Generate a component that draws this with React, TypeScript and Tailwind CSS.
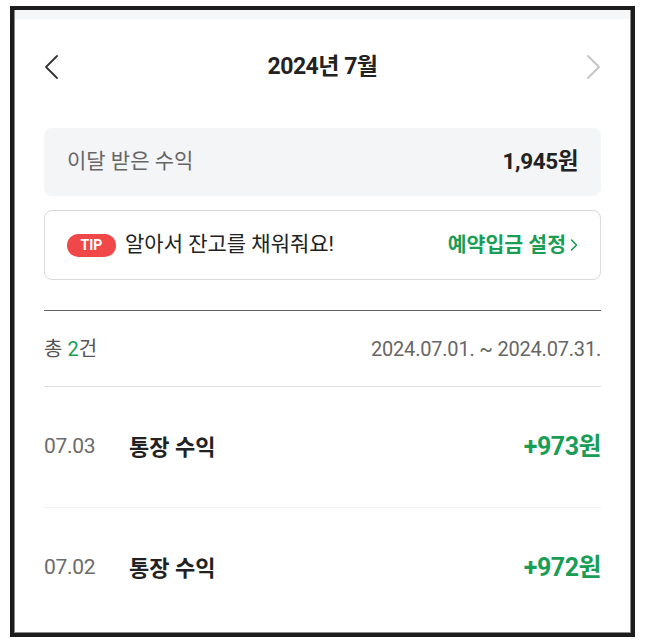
import React from "react";

const font = { fontFamily: '"Roboto", "Noto Sans CJK KR", "Noto Sans", sans-serif' };

function ChevronLeft() {
  return (
    <svg width="16" height="26" viewBox="0 0 16 26" fill="none">
      <path d="M14 2 L3 13 L14 24" stroke="#333" strokeWidth="1.8" strokeLinecap="round" strokeLinejoin="round" />
    </svg>
  );
}
function ChevronRight() {
  return (
    <svg width="16" height="26" viewBox="0 0 16 26" fill="none">
      <path d="M2 2 L13 13 L2 24" stroke="#c4c4c4" strokeWidth="1.8" strokeLinecap="round" strokeLinejoin="round" />
    </svg>
  );
}

function Row({ date, label, amount }: { date: string; label: string; amount: string }) {
  return (
    <div className="flex h-[120px] items-center">
      <span className="w-[85px] text-[21px] text-[#6b6b6b] tracking-[-0.3px]">{date}</span>
      <span className="text-[22px] font-semibold text-[#222]">{label}</span>
      <span className="ml-auto text-[25px] font-bold text-[#1a9d55] tracking-[-0.5px]">{amount}</span>
    </div>
  );
}

export default function App() {
  return (
    <div className="w-[646px] h-[642px] bg-white pt-[6px] pl-[10px]" style={font}>
      <div className="w-[625px] h-[631px] border-[4px] border-[#1c1c1c] bg-[#1c1c1c]">
        <div className="h-full border-x border-b border-[#8a8a8a] bg-white flex flex-col">
          <div className="h-[9px] bg-[#f4f6f7]" />
          <div className="px-[29px] flex flex-col">
            <div className="h-[96px] flex items-center justify-between">
              <div className="-ml-[1px]"><ChevronLeft /></div>
              <span className="text-[23px] font-bold text-[#222] tracking-[-0.5px]">2024년 7월</span>
              <div className="-mr-[1px]"><ChevronRight /></div>
            </div>
            <div className="mt-[13px] h-[68px] rounded-[8px] bg-[#f4f5f7] flex items-center px-[23px]">
              <span className="text-[21px] text-[#666]">이달 받은 수익</span>
              <span className="ml-auto text-[22.5px] font-bold text-[#222] tracking-[-0.4px]">1,945원</span>
            </div>
            <div className="mt-[14px] h-[70px] rounded-[8px] border border-[#d9d9d9] flex items-center px-[22px]">
              <span className="h-[23px] w-[49px] rounded-full bg-[#f04848] text-white text-[14px] font-bold flex items-center justify-center">TIP</span>
              <span className="ml-[9px] text-[21px] text-[#222]">알아서 잔고를 채워줘요!</span>
              <span className="ml-auto text-[20.5px] font-bold text-[#1a9d55] flex items-center">
                예약입금 설정
                <svg className="ml-[4px]" width="8" height="14" viewBox="0 0 8 14" fill="none">
                  <path d="M1.5 2 L6.5 7 L1.5 12" stroke="#1a9d55" strokeWidth="1.6" strokeLinecap="round" strokeLinejoin="round" />
                </svg>
              </span>
            </div>
            <div className="mt-[30px] h-[1px] bg-[#666]" />
            <div className="h-[75px] flex items-center">
              <span className="text-[20px] text-[#555]">
                총 <span className="text-[#1a9d55]">2</span>건
              </span>
              <span className="ml-auto text-[20px] text-[#666] tracking-[-0.2px]">2024.07.01. ~ 2024.07.31.</span>
            </div>
            <div className="h-[1px] bg-[#dedede]" />
            <Row date="07.03" label="통장 수익" amount="+973원" />
            <div className="h-[1px] bg-[#f0f0f0]" />
            <Row date="07.02" label="통장 수익" amount="+972원" />
          </div>
        </div>
      </div>
    </div>
  );
}
